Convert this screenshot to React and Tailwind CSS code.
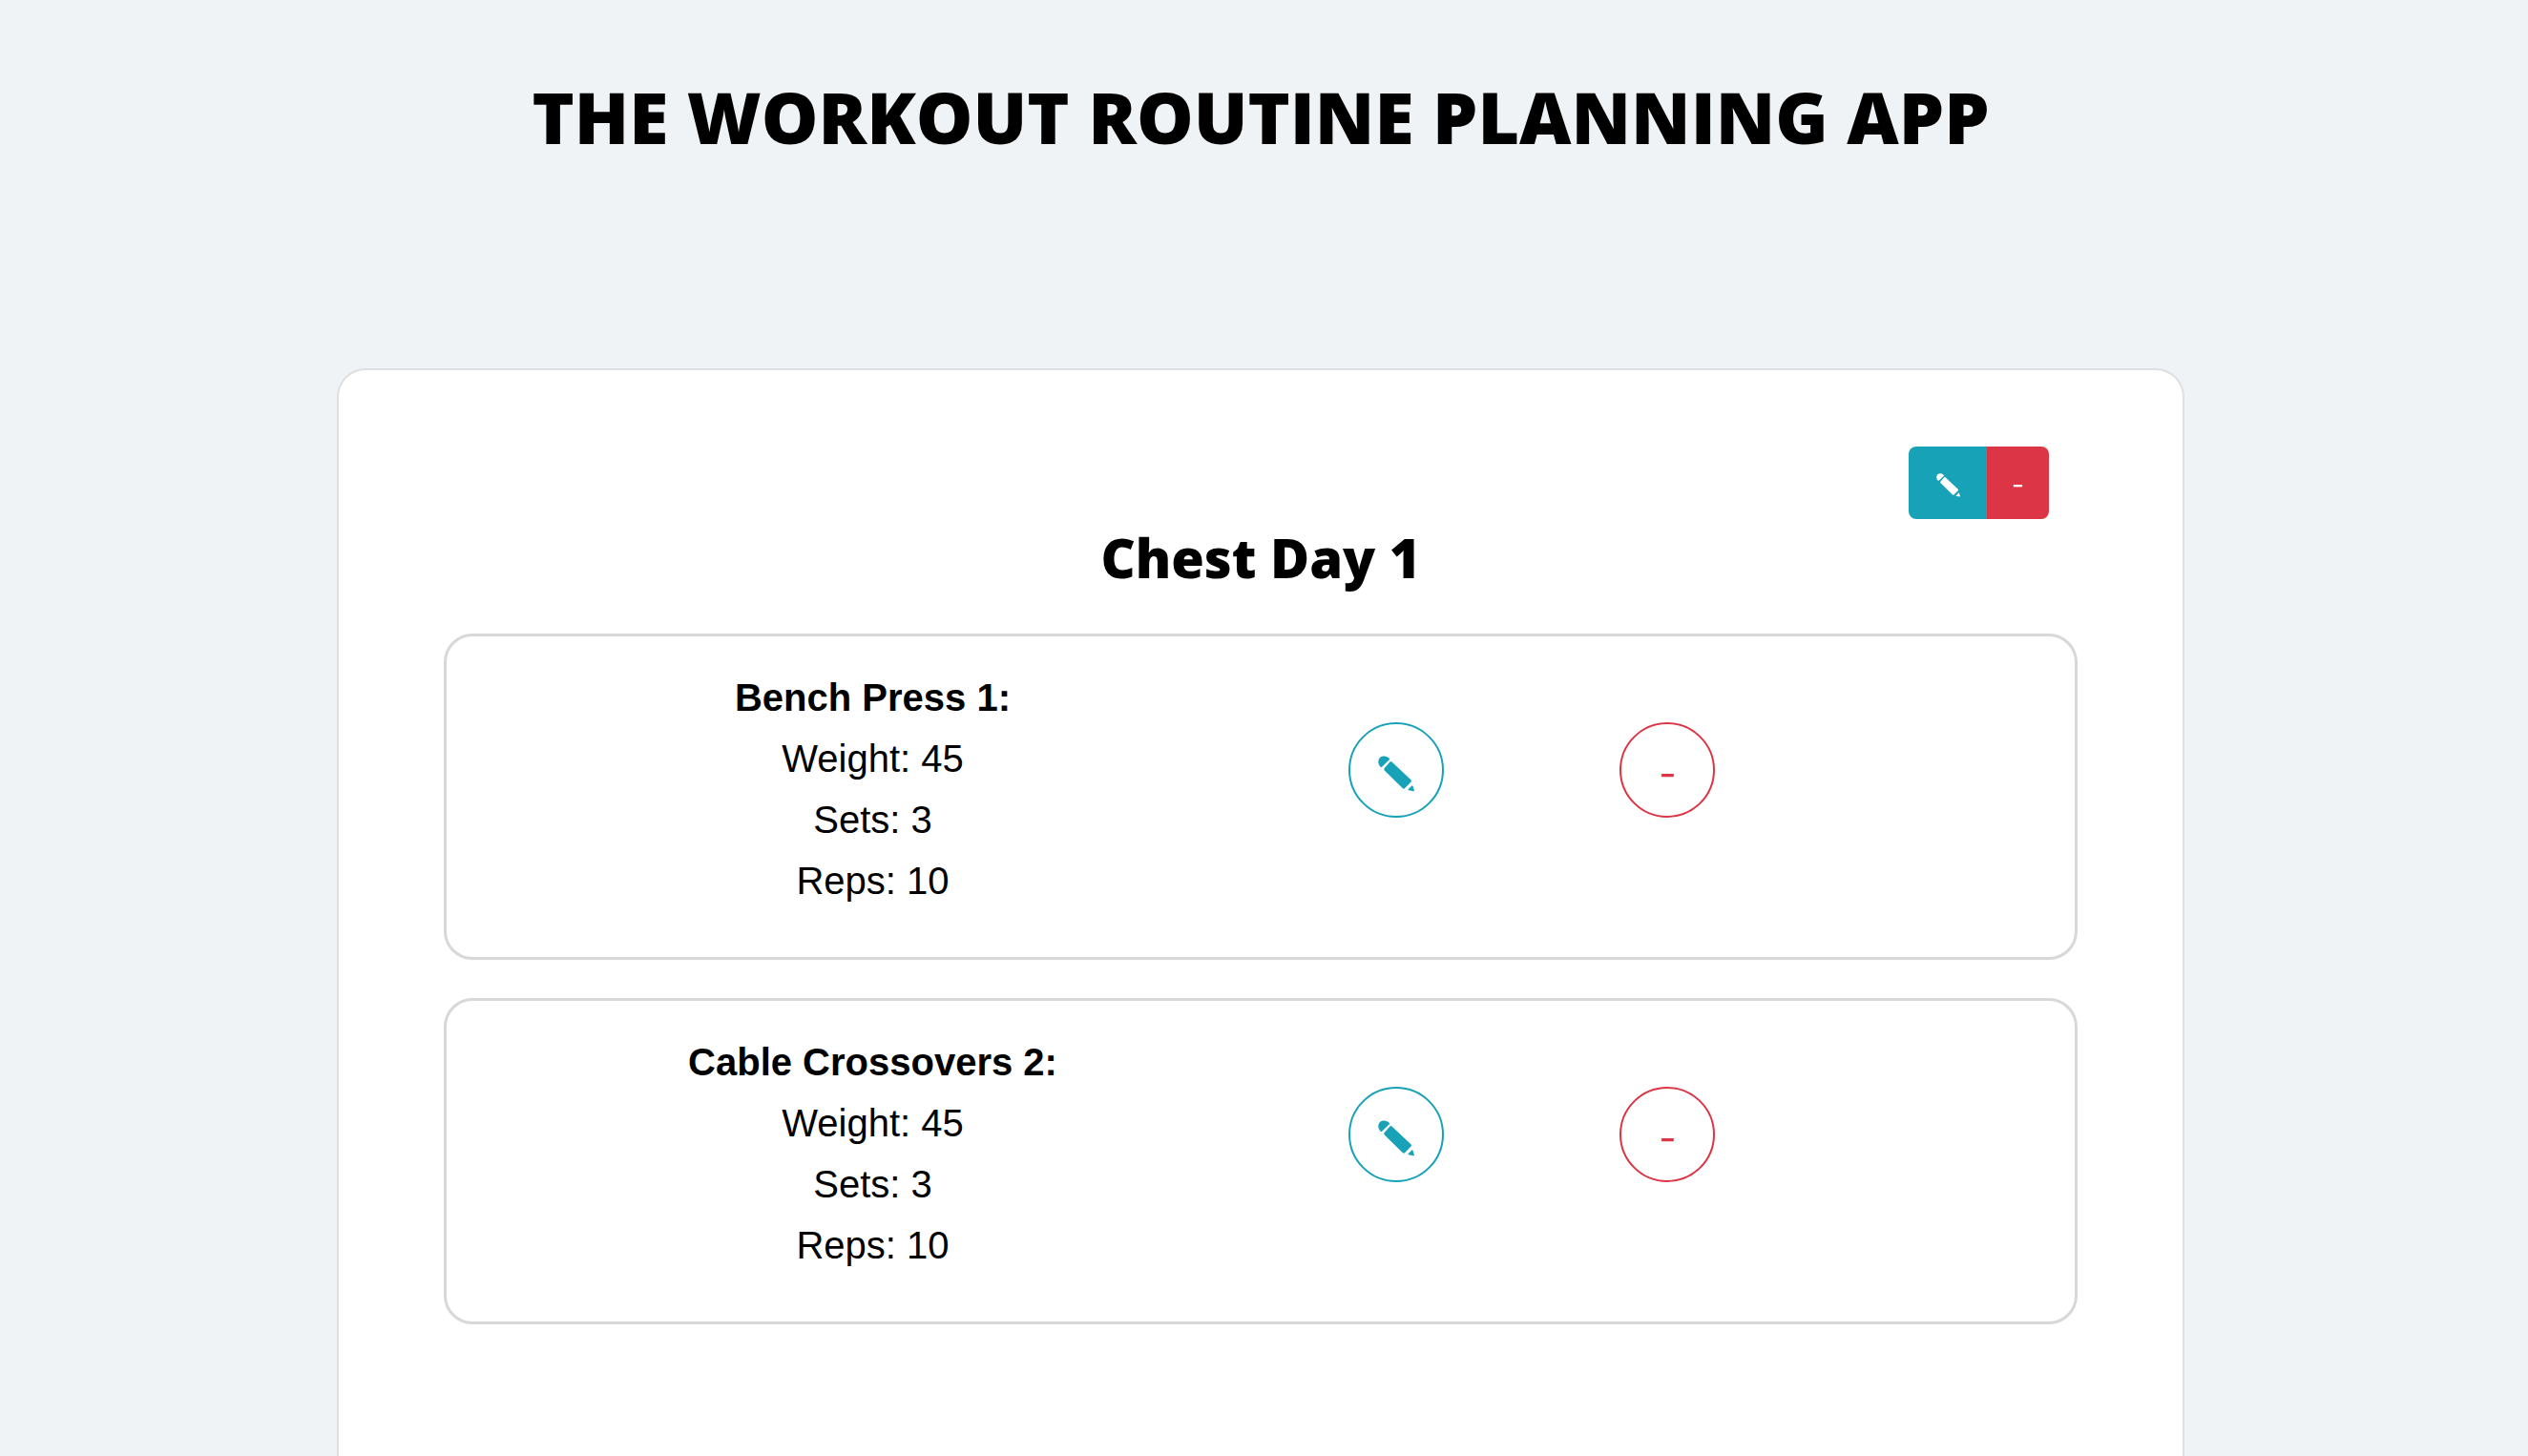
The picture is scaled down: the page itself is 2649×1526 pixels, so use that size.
const exercises = [
  { name: "Bench Press 1", weight: 45, sets: 3, reps: 10 },
  { name: "Cable Crossovers 2", weight: 45, sets: 3, reps: 10 },
];

function Pencil({ className }) {
  return (
    <svg viewBox="26 28 113 113" className={className} fill="currentColor" aria-hidden="true">
      <path d="M62 38 C54 28 40 27 32 34 C25 42 25 53 33 62 Q36 65 39 62 L61 41 Q63 39 62 38 Z" />
      <path d="M63 47 Q66 44 69 47 L129 104 Q131 107 129 110 L109 130 Q106 132 103 130 L46 74 Q43 71 46 67 Z" />
      <path d="M132 121 Q133 120 134 122 L139 137 Q139 139 137 139 L121 136 Q118 135 120 133 Z" />
    </svg>
  );
}

function Exercise({ name, weight, sets, reps }) {
  return (
    <li className="grid grid-cols-12 items-start rounded-[30px] border-[3px] border-[#d8d8d8] pt-8 pb-12">
      <dl className="col-span-6 pl-10 text-center text-[40px] leading-[64px]">
        <dt className="font-bold">{name}:</dt>
        <dd>Weight: {weight}</dd>
        <dd>Sets: {sets}</dd>
        <dd>Reps: {reps}</dd>
      </dl>
      <div className="col-span-2 flex justify-center pt-[58px]">
        <button
          type="button"
          aria-label={`Edit ${name}`}
          className="flex size-[100px] items-center justify-center rounded-full border-2 border-[#17a2b8] pt-2 text-[#17a2b8]"
        >
          <Pencil className="size-[38px]" />
        </button>
      </div>
      <div className="col-span-2 flex justify-center pt-[58px]">
        <button
          type="button"
          aria-label={`Remove ${name}`}
          className="flex size-[100px] items-center justify-center rounded-full border-2 border-[#dc3545] pt-2 font-['Inter',sans-serif] text-[40px] text-[#dc3545]"
        >
          -
        </button>
      </div>
    </li>
  );
}

export default function App() {
  return (
    <div className="flex min-h-screen flex-col bg-[#eff3f6] pt-[82px] pr-[7px] font-['Liberation_Sans',Arial,sans-serif] text-black">
      <h1 className="text-center font-['Open_Sans',sans-serif] text-[75px] leading-[80px] font-extrabold">
        THE WORKOUT ROUTINE PLANNING APP
      </h1>
      <main className="mx-auto mt-[224px] w-[calc(100%-706px)] grow rounded-t-[30px] border-2 border-b-0 border-[#dfdfdf] bg-white px-[110px] pt-20">
        <div className="mr-[30px] ml-auto flex h-[76px] w-fit overflow-hidden rounded-lg text-white">
          <button
            type="button"
            aria-label="Edit routine"
            className="flex w-[82px] items-center justify-center bg-[#17a2b8] pt-1"
          >
            <Pencil className="size-[25px]" />
          </button>
          <button
            type="button"
            aria-label="Remove routine"
            className="flex w-[65px] items-center justify-center bg-[#dc3545] pt-1 font-['Inter',sans-serif] text-[28px]"
          >
            -
          </button>
        </div>
        <h2 className="mt-[10px] text-center font-['Open_Sans',sans-serif] text-[56px] leading-[60px] font-extrabold">
          Chest Day 1
        </h2>
        <ul className="mt-[50px] flex flex-col gap-10">
          {exercises.map((exercise) => (
            <Exercise key={exercise.name} {...exercise} />
          ))}
        </ul>
      </main>
    </div>
  );
}
